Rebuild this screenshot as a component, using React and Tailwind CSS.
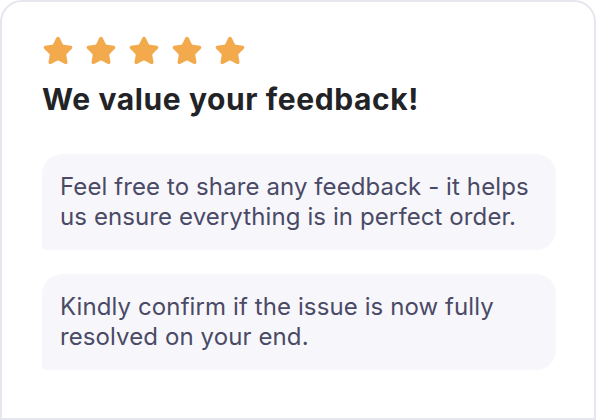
import React from "react";

const Star = () => (
  <svg width="32" height="32" viewBox="0 0 24 24" fill="#f2aa4c" stroke="#f2aa4c" strokeWidth="1.5" strokeLinejoin="round">
    <path d="M11.525 2.295a.53.53 0 0 1 .95 0l2.31 4.679a2.123 2.123 0 0 0 1.595 1.16l5.166.756a.53.53 0 0 1 .294.904l-3.736 3.638a2.123 2.123 0 0 0-.611 1.878l.882 5.14a.53.53 0 0 1-.771.56l-4.618-2.428a2.122 2.122 0 0 0-1.973 0L6.396 21.01a.53.53 0 0 1-.77-.56l.881-5.139a2.122 2.122 0 0 0-.611-1.879L2.16 9.795a.53.53 0 0 1 .294-.906l5.165-.755a2.122 2.122 0 0 0 1.597-1.16z" />
  </svg>
);

const Bubble = ({ children }) => (
  <div className="rounded-[20px] rounded-bl-[4px] bg-[#f7f7fb] px-[18px] py-[18px] text-[24px] leading-[30px] tracking-[0.1px] text-[#4a4a66]">
    {children}
  </div>
);

export default function App() {
  return (
    <div className="w-[596px] h-[420px] bg-white" style={{ fontFamily: "Inter, 'Liberation Sans', sans-serif" }}>
      <div className="h-full rounded-t-[22px] border-2 border-[#e6e6ee] bg-white pl-[40px] pr-[38px] pt-[33px]">
        <div className="flex gap-[11px]">
          <Star />
          <Star />
          <Star />
          <Star />
          <Star />
        </div>
        <h1 className="mt-[14px] text-[30px] leading-[36px] font-bold tracking-[0.6px] text-[#222326]">
          We value your feedback!
        </h1>
        <div className="mt-[37px] flex flex-col gap-[24px]">
          <Bubble>Feel free to share any feedback - it helps us ensure everything is in perfect order.</Bubble>
          <Bubble>Kindly confirm if the issue is now fully resolved on your end.</Bubble>
        </div>
      </div>
    </div>
  );
}
